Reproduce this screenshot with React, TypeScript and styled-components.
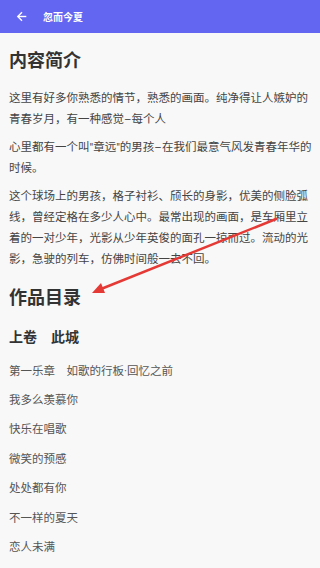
import React from "react";
import styled, { createGlobalStyle } from "styled-components";

const Global = createGlobalStyle`
  html, body { margin: 0; padding: 0; background: #f8f8f8; }
  body { font-family: Roboto, "Noto Sans CJK SC", sans-serif; }
  * { box-sizing: border-box; }
`;

const Page = styled.div`
  position: relative;
  width: 320px;
  min-height: 568px;
  background: #f8f8f8;
  overflow: hidden;
`;

const Header = styled.header`
  height: 33px;
  background: #6366f1;
  display: flex;
  align-items: center;
  padding-left: 16px;
  gap: 16px;
  color: #fff;
`;

const BackButton = styled.button`
  border: 0;
  background: none;
  padding: 0;
  width: 11px;
  height: 11px;
  display: flex;
  color: #fff;
`;

const Title = styled.h2`
  margin: 0;
  font-size: 10px;
  font-weight: 700;
`;

const Content = styled.main`
  display: block;
  padding: 0 7px 20px 9px;
`;

const SectionTitle = styled.h1`
  margin: 14px 0 13px;
  font-size: 18px;
  line-height: 28px;
  font-weight: 700;
  color: #333;
`;

const Paragraph = styled.p`
  margin: 0 0 7px;
  font-size: 11.5px;
  line-height: 21px;
  color: #444;
`;

const Volume = styled.h3`
  margin: 0 0 6px;
  font-size: 14px;
  line-height: 24px;
  font-weight: 700;
  color: #333;
`;

const ChapterList = styled.ul`
  list-style: none;
  margin: 0;
  padding: 0;
  display: flex;
  flex-direction: column;
`;

const Chapter = styled.li`
  height: 29.4px;
  display: flex;
  align-items: center;
  font-size: 11.5px;
  color: #555;
`;

const Annotation = styled.svg`
  position: absolute;
  left: 0;
  top: 0;
  pointer-events: none;
`;

const chapters = [
  "第一乐章　如歌的行板·回忆之前",
  "我多么羡慕你",
  "快乐在唱歌",
  "微笑的预感",
  "处处都有你",
  "不一样的夏天",
  "恋人未满",
];

export default function App() {
  return (
    <Page>
      <Global />
      <Header>
        <BackButton aria-label="返回">
          <svg width="11" height="11" viewBox="0 0 24 24" fill="none" stroke="#fff" strokeWidth="3" strokeLinecap="square">
            <path d="M21 12H5" />
            <path d="M12 4l-8 8 8 8" />
          </svg>
        </BackButton>
        <Title>忽而今夏</Title>
      </Header>
      <Content>
        <SectionTitle>内容简介</SectionTitle>
        <Paragraph>这里有好多你熟悉的情节，熟悉的画面。纯净得让人嫉妒的青春岁月，有一种感觉–每个人</Paragraph>
        <Paragraph>心里都有一个叫"章远"的男孩–在我们最意气风发青春年华的时候。</Paragraph>
        <Paragraph>这个球场上的男孩，格子衬衫、颀长的身影，优美的侧脸弧线，曾经定格在多少人心中。最常出现的画面，是车厢里立着的一对少年，光影从少年英俊的面孔一掠而过。流动的光影，急驶的列车，仿佛时间般一去不回。</Paragraph>
        <SectionTitle>作品目录</SectionTitle>
        <Volume>上卷　此城</Volume>
        <ChapterList>
          {chapters.map((c) => (
            <Chapter key={c}>{c}</Chapter>
          ))}
        </ChapterList>
      </Content>
      <Annotation width="320" height="568" viewBox="0 0 320 568">
        <line x1="276" y1="219" x2="101" y2="289" stroke="#e53935" strokeWidth="2.5" strokeLinecap="round" />
        <polygon points="92,293 101,283 105,293" fill="#e53935" />
      </Annotation>
    </Page>
  );
}
